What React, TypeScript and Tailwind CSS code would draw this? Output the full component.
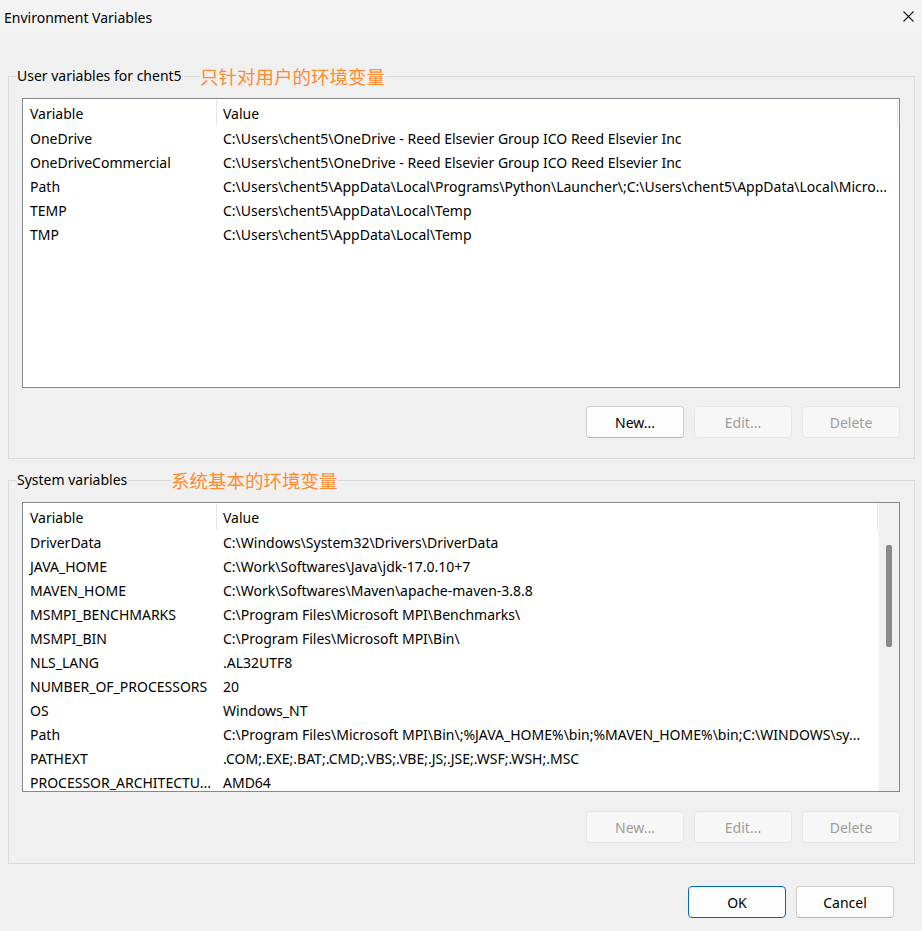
import React from "react";

type Row = [string, string];

const userRows: Row[] = [
  ["OneDrive", "C:\\Users\\chent5\\OneDrive - Reed Elsevier Group ICO Reed Elsevier Inc"],
  ["OneDriveCommercial", "C:\\Users\\chent5\\OneDrive - Reed Elsevier Group ICO Reed Elsevier Inc"],
  ["Path", "C:\\Users\\chent5\\AppData\\Local\\Programs\\Python\\Launcher\\;C:\\Users\\chent5\\AppData\\Local\\Micro..."],
  ["TEMP", "C:\\Users\\chent5\\AppData\\Local\\Temp"],
  ["TMP", "C:\\Users\\chent5\\AppData\\Local\\Temp"],
];

const systemRows: Row[] = [
  ["DriverData", "C:\\Windows\\System32\\Drivers\\DriverData"],
  ["JAVA_HOME", "C:\\Work\\Softwares\\Java\\jdk-17.0.10+7"],
  ["MAVEN_HOME", "C:\\Work\\Softwares\\Maven\\apache-maven-3.8.8"],
  ["MSMPI_BENCHMARKS", "C:\\Program Files\\Microsoft MPI\\Benchmarks\\"],
  ["MSMPI_BIN", "C:\\Program Files\\Microsoft MPI\\Bin\\"],
  ["NLS_LANG", ".AL32UTF8"],
  ["NUMBER_OF_PROCESSORS", "20"],
  ["OS", "Windows_NT"],
  ["Path", "C:\\Program Files\\Microsoft MPI\\Bin\\;%JAVA_HOME%\\bin;%MAVEN_HOME%\\bin;C:\\WINDOWS\\sy..."],
  ["PATHEXT", ".COM;.EXE;.BAT;.CMD;.VBS;.VBE;.JS;.JSE;.WSF;.WSH;.MSC"],
  ["PROCESSOR_ARCHITECTU...", "AMD64"],
];

function VarList({ rows, scroll }: { rows: Row[]; scroll?: boolean }) {
  return (
    <div className="ml-[6px] h-[290px] border border-[#828790] bg-white flex overflow-hidden">
      <div className="flex-1 min-w-0 flex flex-col">
        <div className="flex h-[27px] shrink-0 pt-[1px]">
          <div className="w-[194px] shrink-0 border-r border-[#e5e5e5] pl-[7px] leading-[28px]">Variable</div>
          <div className="flex-1 border-r border-[#e5e5e5] mr-[1px] pl-[6px] leading-[28px]">Value</div>
        </div>
        {rows.map(([k, v], i) => (
          <div key={i} className="flex h-[24px] shrink-0 leading-[26px] whitespace-nowrap">
            <div className="w-[194px] shrink-0 pl-[7px] overflow-hidden">{k}</div>
            <div className="flex-1 min-w-0 pl-[6px] overflow-hidden">{v}</div>
          </div>
        ))}
      </div>
      {scroll && (
        <div className="w-[20px] shrink-0 bg-[#f0f0f0] pt-[42px] pl-[7px]">
          <div className="w-[6px] h-[102px] bg-[#8a8a8a] rounded-[2px]" />
        </div>
      )}
    </div>
  );
}

function Btn({ label, disabled, primary }: { label: string; disabled?: boolean; primary?: boolean }) {
  const cls = disabled
    ? "bg-[#f7f7f7] border-[#e6e6e6] text-[#9d9d9d]"
    : primary
    ? "bg-[#fdfdfd] border-[#0067c0] text-black"
    : "bg-[#fdfdfd] border-[#d0d0d0] border-b-[#b7b7b7] text-black";
  return (
    <div className={`w-[98px] h-[32px] rounded-[4px] border flex items-center justify-center ${cls}`}>
      {label}
    </div>
  );
}

function Group({
  label,
  note,
  noteLeft,
  rows,
  scroll,
  disabledNew,
  btnMt,
}: {
  label: string;
  note: string;
  noteLeft: string;
  rows: Row[];
  scroll?: boolean;
  disabledNew?: boolean;
  btnMt: string;
}) {
  return (
    <fieldset className="border border-[#dadada] pl-[7px] pr-[14px] pt-[12px] pb-[20px]">
      <legend className="relative px-[1px] leading-[20px]">
        {label}
        <span
          className={`absolute top-1/2 -translate-y-1/2 ${noteLeft} bg-[#f0f0f0] text-[#ff8a30] text-[18.5px] leading-[22px] whitespace-nowrap`}
          style={{ fontFamily: '"Noto Sans CJK SC", "Noto Sans", sans-serif' }}
        >
          {note}
        </span>
      </legend>
      <VarList rows={rows} scroll={scroll} />
      <div className={`flex justify-end gap-[10px] ${btnMt}`}>
        <Btn label="New..." disabled={disabledNew} />
        <Btn label="Edit..." disabled />
        <Btn label="Delete" disabled />
      </div>
    </fieldset>
  );
}

export default function App() {
  return (
    <div
      className="w-[922px] h-[931px] bg-[#f0f0f0] text-black text-[14px] flex flex-col overflow-hidden"
      style={{ fontFamily: '"Noto Sans", "Open Sans", sans-serif' }}
    >
      <div className="h-[35px] shrink-0 bg-[#f3f3f3] flex items-center justify-between pl-[4px] pr-[8px]">
        <span className="leading-[20px]">Environment Variables</span>
        <svg width="11" height="11" viewBox="0 0 11 11" className="mt-[-2px]">
          <path d="M0.5 0.5 L10.5 10.5 M10.5 0.5 L0.5 10.5" stroke="#1b1b1b" strokeWidth="1.1" fill="none" />
        </svg>
      </div>
      <div className="ml-[8px] mr-[7px] mt-[31px] flex flex-col">
        <Group
          label="User variables for chent5"
          note="只针对用户的环境变量"
          noteLeft="left-[184px]"
          rows={userRows}
          btnMt="mt-[18px]"
        />
        <div className="h-[11px]" />
        <Group
          label="System variables"
          note="系统基本的环境变量"
          noteLeft="left-[155px]"
          rows={systemRows}
          scroll
          disabledNew
          btnMt="mt-[19px]"
        />
      </div>
      <div className="flex justify-end gap-[10px] pr-[28px] mt-[22px]">
        <Btn label="OK" primary />
        <Btn label="Cancel" />
      </div>
    </div>
  );
}
